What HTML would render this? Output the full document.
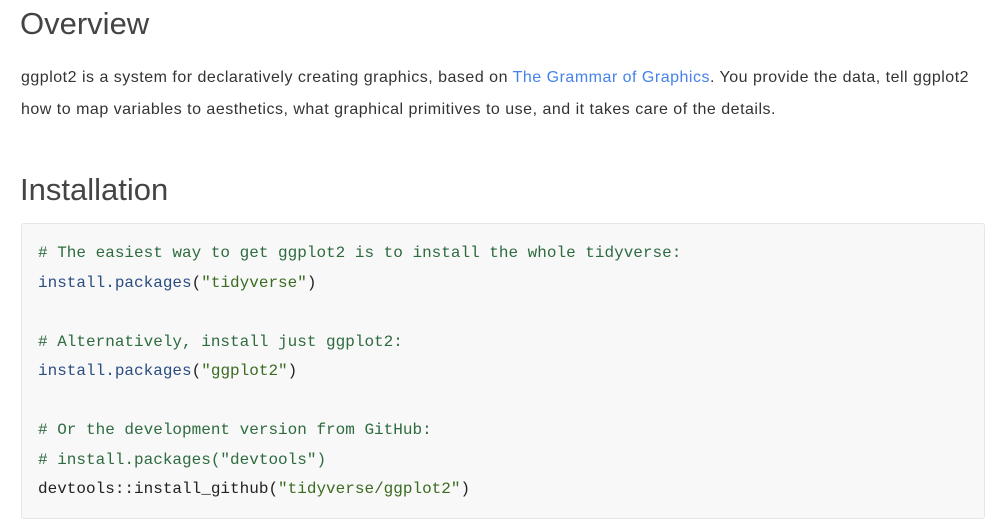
<!DOCTYPE html>
<html><head><style>
body{margin:0;background:#fff;font-family:"Liberation Sans",sans-serif;color:#333;width:1000px;height:532px;overflow:hidden}
h2{font-weight:normal;font-size:31px;margin:0;position:absolute;left:20px;color:#444}
p{position:absolute;left:21px;top:62px;margin:0;font-size:16px;letter-spacing:0.5px;line-height:32px;width:968px}
a{color:#4582ec;text-decoration:none}
pre{position:absolute;left:21px;top:223px;width:964px;height:296px;margin:0;background:#f8f8f8;border:1px solid #e6e6e6;border-radius:3px;font-family:"Liberation Mono",monospace;font-size:16px;line-height:29.5px;padding:0 0 0 16px;box-sizing:border-box;padding-top:15px;color:#222}
.c{color:#2e6b3f}.f{color:#2a4d80}.s{color:#3a6b1f}
</style></head><body>
<h2 style="top:6px">Overview</h2>
<p>ggplot2 is a system for declaratively creating graphics, based on <a>The Grammar of Graphics</a>. You provide the data, tell ggplot2 how to map variables to aesthetics, what graphical primitives to use, and it takes care of the details.</p>
<h2 style="top:172px">Installation</h2>
<pre><span class="c"># The easiest way to get ggplot2 is to install the whole tidyverse:</span>
<span class="f">install.packages</span>(<span class="s">"tidyverse"</span>)

<span class="c"># Alternatively, install just ggplot2:</span>
<span class="f">install.packages</span>(<span class="s">"ggplot2"</span>)

<span class="c"># Or the development version from GitHub:</span>
<span class="c"># install.packages("devtools")</span>
devtools::install_github(<span class="s">"tidyverse/ggplot2"</span>)</pre>
</body></html>
